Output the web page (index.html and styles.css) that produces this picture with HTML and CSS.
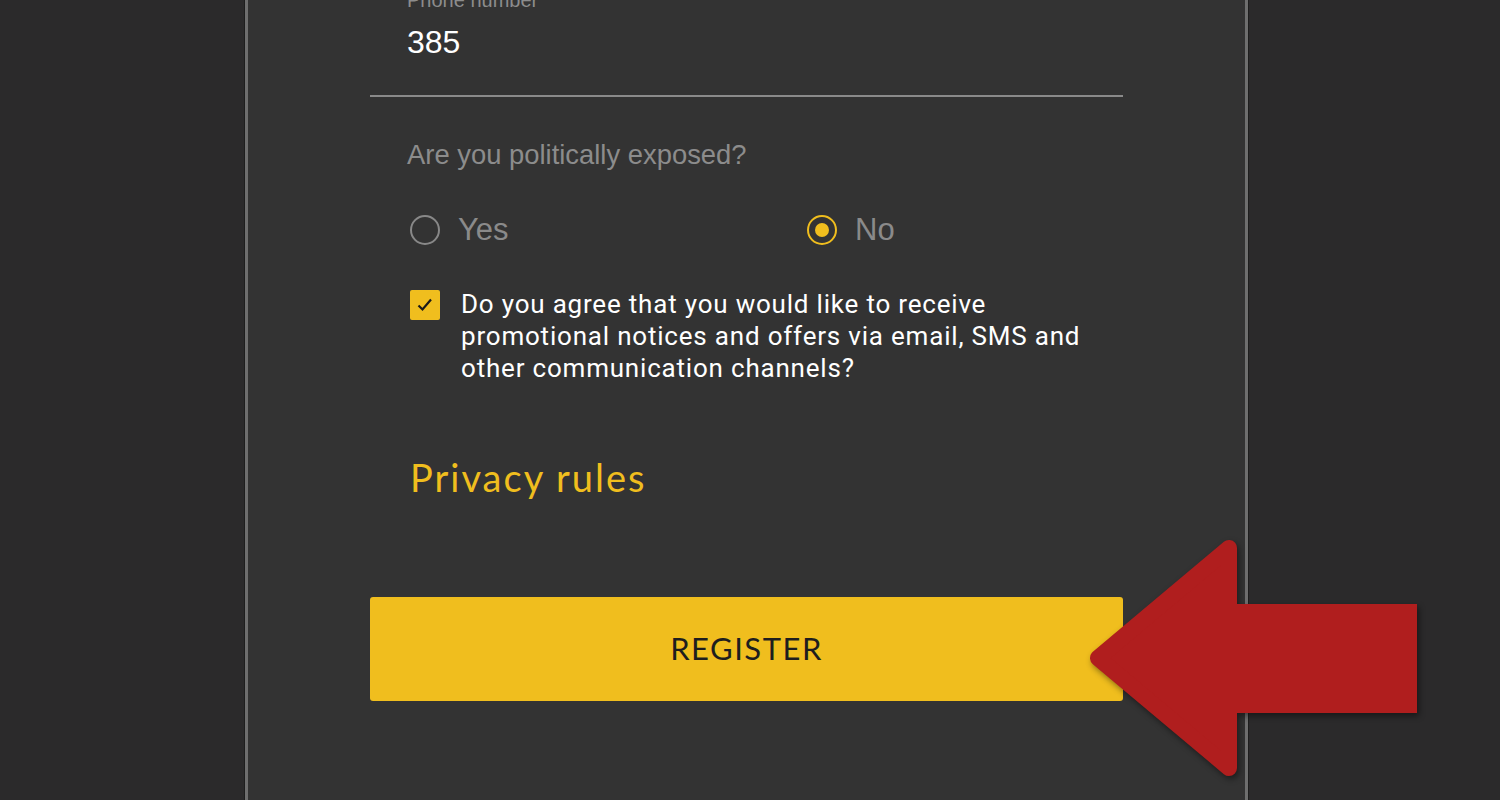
FILE: index.html
```html
<!DOCTYPE html>
<html lang="en">
<head>
  <meta charset="UTF-8">
  <title>Register</title>
  <meta name="viewport" content="width=device-width, initial-scale=1">
  <link rel="stylesheet" href="styles.css">
</head>
<body>

<div class="panel">
  <form class="form" onsubmit="return false">
    <div class="field">
      <label class="field-label">Phone number</label>
      <div class="field-value">385</div>
    </div>

    <div class="question">Are you politically exposed?</div>

    <div class="radios">
      <label class="radio">
        <span class="radio-dot"></span>
        <span class="radio-text">Yes</span>
      </label>
      <label class="radio checked">
        <span class="radio-dot"></span>
        <span class="radio-text">No</span>
      </label>
    </div>

    <div class="consent">
      <span class="checkbox">
        <svg width="30" height="30" viewBox="0 0 30 30">
          <path d="M8.5 15.5 L12.5 19.5 L21 9.5" fill="none" stroke="#1a1a1a" stroke-width="2.2"/>
        </svg>
      </span>
      <span class="consent-text">Do you agree that you would like to receive promotional notices and offers via email, SMS and other communication channels?</span>
    </div>

    <a class="privacy" href="#">Privacy rules</a>

    <button class="register" id="register">REGISTER</button>
  </form>
</div>

<!-- pointer arrow drawn over the page -->
<svg class="arrow" width="360" height="260" viewBox="1070 530 360 260">
  <rect x="1228" y="604" width="189" height="109" fill="#b01e1e"/>
  <polygon points="1098,658 1229,548 1229,768" fill="#b01e1e" stroke="#b01e1e" stroke-width="16" stroke-linejoin="round"/>
</svg>

</body>
</html>
```

FILE: styles.css
```css
:root {
  --bgColor: #2b2a2b;
  --panelColor: #333333;
  --lineColor: #8a8a8a;
  --mutedColor: #8c8c8c;
  --yellow: #f0be1e;
}

* {
  box-sizing: border-box;
}

html, body {
  height: 100%;
}

body {
  margin: 0;
  background: var(--bgColor);
  overflow: hidden;
  font-family: "Liberation Sans", Arial, sans-serif;
}

.panel {
  margin-left: 245px;
  width: 1003px;
  height: 800px;
  background: var(--panelColor);
  border-left: 3px solid #6e6e6e;
  border-right: 3px solid #6e6e6e;
  box-shadow: 1px 0 0 #1e1e1e, -1px 0 0 #1e1e1e;
}

.form {
  width: 753px;
  margin: 0 auto;
  display: flex;
  flex-direction: column;
}

.field {
  margin-top: -12px;
  padding: 0 37px 33px;
  border-bottom: 2px solid var(--lineColor);
}

.field-label {
  display: block;
  font-size: 20px;
  line-height: 24px;
  color: var(--mutedColor);
}

.field-value {
  margin-top: 10px;
  font-size: 32px;
  line-height: 40px;
  color: #fff;
}

.question {
  margin-top: 42px;
  padding-left: 37px;
  font-size: 27.4px;
  line-height: 32px;
  color: var(--mutedColor);
}

.radios {
  margin-top: 44px;
  padding-left: 40px;
  display: grid;
  grid-template-columns: 397px 1fr;
}

.radio {
  display: flex;
  align-items: center;
  gap: 18px;
  height: 30px;
}

.radio-dot {
  width: 30px;
  height: 30px;
  border-radius: 50%;
  border: 2px solid #888;
  display: grid;
  place-items: center;
}

.radio.checked .radio-dot {
  border-color: var(--yellow);
}

.radio.checked .radio-dot::after {
  content: "";
  width: 14px;
  height: 14px;
  border-radius: 50%;
  background: var(--yellow);
}

.radio-text {
  font-size: 31px;
  color: #8a8a8a;
}

.consent {
  margin-top: 43px;
  padding-left: 40px;
  display: flex;
  align-items: flex-start;
  gap: 21px;
}

.checkbox {
  flex: none;
  width: 30px;
  height: 30px;
  margin-top: 2px;
  background: var(--yellow);
  border-radius: 2px;
}

.checkbox svg {
  display: block;
}

.consent-text {
  width: 640px;
  font-family: Roboto, "Liberation Sans", sans-serif;
  font-size: 26px;
  line-height: 32px;
  letter-spacing: 0.8px;
  color: #fff;
}

.privacy {
  margin-top: 71px;
  padding-left: 40px;
  font-family: Lato, "Liberation Sans", sans-serif;
  font-size: 38px;
  line-height: 44px;
  letter-spacing: 2px;
  color: var(--yellow);
  text-decoration: none;
}

.register {
  margin-top: 98px;
  height: 104px;
  padding-bottom: 4px;
  border: none;
  border-radius: 3px;
  background: var(--yellow);
  font-family: Lato, "Liberation Sans", sans-serif;
  font-size: 31px;
  letter-spacing: 1.5px;
  color: #1e1e1e;
  cursor: pointer;
}

.arrow {
  position: absolute;
  left: 1070px;
  top: 530px;
  filter: drop-shadow(2px 3px 3px rgba(0, 0, 0, 0.45));
}
```
